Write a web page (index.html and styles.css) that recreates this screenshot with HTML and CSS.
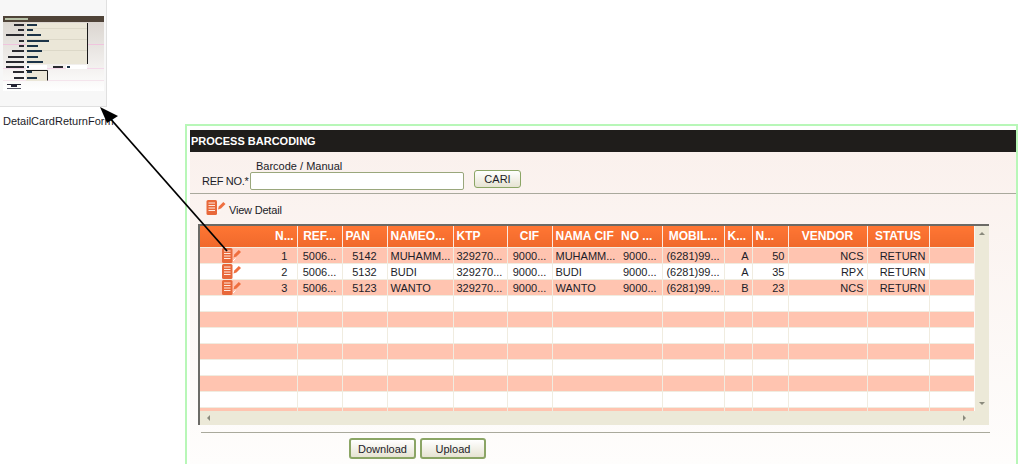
FILE: index.html
```html
<!DOCTYPE html>
<html lang="en">
  <head>
    <meta charset="UTF-8" />
    <title>Process Barcoding</title>
    <link rel="stylesheet" href="styles.css">
  </head>
  <body>
    <svg class="sprite" width="0" height="0">
      <symbol id="icon-detail" viewBox="0 0 19 15">
        <rect x="0" y="0" width="10.5" height="15" rx="1.5" fill="#e8683a"/>
        <path d="M2 3h6.5M2 5.5h6.5M2 8h6.5M2 10.5h6.5" stroke="#ffe9df" stroke-width="1"/>
        <path d="M11.5 9.5l.8-3L16.8 2l2.2 2-4.5 4.6z" fill="#ef6f3f"/>
        <path d="M11 13l2.5-2.5" stroke="#fff" stroke-width="1"/>
      </symbol>
      <linearGradient id="thumb-fade" x1="0" y1="0" x2="0" y2="1">
        <stop offset="0" stop-color="#d8d2cc"/>
        <stop offset="1" stop-color="#ffffff"/>
      </linearGradient>
    </svg>

    <div class="thumb">
      <div class="thumb-box">
        <svg class="thumb-pic" width="107" height="107" viewBox="0 0 107 107">
          <rect x="3" y="16" width="101" height="75" fill="url(#thumb-fade)"/>
          <rect x="3" y="16" width="101" height="6" fill="#4f4338"/>
          <rect x="5" y="18" width="23" height="2" fill="#b8c2a8"/>
          <rect x="3" y="44" width="101" height="1" fill="#f0c4de"/>
          <rect x="3" y="68" width="101" height="1" fill="#f4d8ea"/>
          <rect x="3" y="80" width="101" height="1" fill="#f4e4ec"/>
          <rect x="26" y="23" width="61" height="41" fill="#ebe7d8"/>
          <path d="M26 28.500h61M26 39.500h61M26 50.500h61" stroke="#dcd8c8" fill="none"/>
          <path d="M87.500 23v41" stroke="#1a1a1a" fill="none"/>
          <rect x="26" y="65" width="21" height="4" fill="#fff"/>
          <rect x="66" y="65" width="21" height="4" fill="#fff"/>
          <rect x="26" y="70" width="21" height="11" fill="#ebe7d8"/>
          <path d="M26 70.500h21.500v10" stroke="#1a1a1a" fill="none"/>
          <g fill="#2a2a30">
            <rect x="14" y="24" width="10" height="2"/><rect x="18" y="29" width="6" height="2"/>
            <rect x="6" y="34" width="18" height="2"/><rect x="19" y="40" width="5" height="2"/>
            <rect x="19" y="45" width="5" height="2"/><rect x="12" y="50" width="12" height="2"/>
            <rect x="8" y="56" width="16" height="2"/><rect x="6" y="61" width="18" height="2"/>
            <rect x="6" y="66" width="18" height="2"/><rect x="13" y="71" width="11" height="2"/>
            <rect x="14" y="77" width="10" height="2"/><rect x="53" y="66" width="10" height="2"/>
          </g>
          <g fill="#1c3448">
            <rect x="27" y="24" width="10" height="2"/><rect x="27" y="29" width="6" height="2"/>
            <rect x="27" y="34" width="14" height="2"/><rect x="27" y="40" width="22" height="2"/>
            <rect x="27" y="45" width="11" height="2"/><rect x="27" y="50" width="15" height="2"/>
            <rect x="27" y="56" width="11" height="2"/><rect x="27" y="61" width="16" height="2"/>
            <rect x="27" y="66" width="2" height="2"/><rect x="67" y="66" width="3" height="2"/>
            <rect x="27" y="71" width="5" height="2"/><rect x="27" y="77" width="10" height="2"/>
          </g>
          <rect x="7" y="84" width="14" height="1" fill="#223"/>
          <rect x="11" y="85" width="6" height="2" fill="#223"/>
          <rect x="7" y="88" width="14" height="1" fill="#556"/>
        </svg>
      </div>
      <p class="thumb-name">DetailCardReturnForm</p>
    </div>

    <div class="frame">
      <div class="panel">
        <header class="title">PROCESS BARCODING</header>

        <div class="search">
          <label class="ref-label" for="ref">REF NO.*</label>
          <div class="ref-field">
            <span class="caption">Barcode / Manual</span>
            <input id="ref" type="text" />
          </div>
          <button class="btn btn-cari">CARI</button>
        </div>

        <div class="toolbar">
          <svg class="icon" width="20" height="15"><use href="#icon-detail"/></svg>
          <span>View Detail</span>
        </div>

        <div class="grid">
          <div class="grid-main">
            <div class="grid-view">
              <table>
                <colgroup>
                  <col class="c-icon"><col class="c-no"><col class="c-ref"><col class="c-pan"><col class="c-name">
                  <col class="c-ktp"><col class="c-cif"><col class="c-nama"><col class="c-nomor"><col class="c-mobile">
                  <col class="c-k"><col class="c-n"><col class="c-vendor"><col class="c-status"><col class="c-end">
                </colgroup>
                <thead>
                  <tr>
                    <th class="noline"></th><th class="center">N...</th><th class="center">REF...</th><th>PAN</th><th>NAMEO...</th>
                    <th>KTP</th><th class="center">CIF</th><th class="noline">NAMA CIF</th><th>NO ...</th><th class="center">MOBIL...</th>
                    <th>K...</th><th>N...</th><th class="center">VENDOR</th><th class="center">STATUS</th><th></th>
                  </tr>
                </thead>
                <tbody>
                  <tr>
                    <td class="noline icon-cell"><svg class="icon" width="19" height="15"><use href="#icon-detail"/></svg></td>
                    <td class="center">1</td><td class="center">5006...</td><td class="center">5142</td><td>MUHAMM...</td>
                    <td>329270...</td><td class="center">9000...</td><td class="noline">MUHAMM...</td><td class="center">9000...</td><td class="center">(6281)99...</td>
                    <td class="right">A</td><td class="right">50</td><td class="right">NCS</td><td class="right">RETURN</td><td></td>
                  </tr>
                  <tr>
                    <td class="noline icon-cell"><svg class="icon" width="19" height="15"><use href="#icon-detail"/></svg></td>
                    <td class="center">2</td><td class="center">5006...</td><td class="center">5132</td><td>BUDI</td>
                    <td>329270...</td><td class="center">9000...</td><td class="noline">BUDI</td><td class="center">9000...</td><td class="center">(6281)99...</td>
                    <td class="right">A</td><td class="right">35</td><td class="right">RPX</td><td class="right">RETURN</td><td></td>
                  </tr>
                  <tr>
                    <td class="noline icon-cell"><svg class="icon" width="19" height="15"><use href="#icon-detail"/></svg></td>
                    <td class="center">3</td><td class="center">5006...</td><td class="center">5123</td><td>WANTO</td>
                    <td>329270...</td><td class="center">9000...</td><td class="noline">WANTO</td><td class="center">9000...</td><td class="center">(6281)99...</td>
                    <td class="right">B</td><td class="right">23</td><td class="right">NCS</td><td class="right">RETURN</td><td></td>
                  </tr>
                  <tr><td class="noline"></td><td></td><td></td><td></td><td></td><td></td><td></td><td class="noline"></td><td></td><td></td><td></td><td></td><td></td><td></td><td></td></tr>
                  <tr><td class="noline"></td><td></td><td></td><td></td><td></td><td></td><td></td><td class="noline"></td><td></td><td></td><td></td><td></td><td></td><td></td><td></td></tr>
                  <tr><td class="noline"></td><td></td><td></td><td></td><td></td><td></td><td></td><td class="noline"></td><td></td><td></td><td></td><td></td><td></td><td></td><td></td></tr>
                  <tr><td class="noline"></td><td></td><td></td><td></td><td></td><td></td><td></td><td class="noline"></td><td></td><td></td><td></td><td></td><td></td><td></td><td></td></tr>
                  <tr><td class="noline"></td><td></td><td></td><td></td><td></td><td></td><td></td><td class="noline"></td><td></td><td></td><td></td><td></td><td></td><td></td><td></td></tr>
                  <tr><td class="noline"></td><td></td><td></td><td></td><td></td><td></td><td></td><td class="noline"></td><td></td><td></td><td></td><td></td><td></td><td></td><td></td></tr>
                  <tr><td class="noline"></td><td></td><td></td><td></td><td></td><td></td><td></td><td class="noline"></td><td></td><td></td><td></td><td></td><td></td><td></td><td></td></tr>
                  <tr><td class="noline"></td><td></td><td></td><td></td><td></td><td></td><td></td><td class="noline"></td><td></td><td></td><td></td><td></td><td></td><td></td><td></td></tr>
                </tbody>
              </table>
            </div>
            <div class="vscroll"><i class="arrow-up"></i><i class="arrow-down"></i></div>
          </div>
          <div class="hscroll"><i class="arrow-left"></i><i class="arrow-right"></i></div>
        </div>

        <div class="actions">
          <button class="btn btn-download">Download</button>
          <button class="btn btn-upload">Upload</button>
        </div>
      </div>
    </div>

    <svg class="connector" width="1018" height="464">
      <line x1="108" y1="116" x2="227" y2="251" stroke="#000" stroke-width="1.8"/>
      <polygon points="100,107 118,116 107,123" fill="#000"/>
    </svg>
  </body>
</html>
```

FILE: styles.css
```css
* {
  box-sizing: border-box;
  margin: 0;
  padding: 0;
}
html, body {
  height: 464px;
  overflow: hidden;
}
body {
  position: relative;
  background-color: #fff;
  font-family: "Liberation Sans", Arial, sans-serif;
  font-size: 11px;
  color: #1c1c28;
}
.sprite {
  display: block;
  height: 0;
}
.connector {
  position: absolute;
  top: 0;
  left: 0;
  pointer-events: none;
}

/* thumbnail */
.thumb {
  width: 112px;
  height: 124px;
}
.thumb-box {
  width: 107px;
  height: 107px;
  background-color: #f7f7f7;
  border-right: 1px solid #e0e0e0;
  border-bottom: 1px solid #e0e0e0;
}
.thumb-pic {
  display: block;
}
.thumb-name {
  margin: 7px 0 0 3px;
  line-height: 14px;
  white-space: nowrap;
}

/* main frame */
.frame {
  height: 340px;
  margin-left: 185px;
  padding: 4px 0 0 3px;
  background-color: #fff;
  border: solid #b8f7b8;
  border-width: 2px 2px 0 2px;
}
.panel {
  height: 334px;
  background: linear-gradient(#faf0ec, #fefdfc);
}
.title {
  height: 22px;
  padding-left: 1px;
  line-height: 22px;
  font-size: 11px;
  font-weight: bold;
  color: #fff;
  background-color: #1f1d1b;
}
.search {
  display: flex;
  align-items: flex-end;
  height: 42px;
  padding: 9px 0 3px 12px;
  border-bottom: 1px solid #a9a99c;
}
.ref-label {
  width: 48px;
  height: 18px;
  line-height: 18px;
  letter-spacing: -0.3px;
  white-space: nowrap;
}
.ref-field {
  display: flex;
  flex-direction: column;
}
.caption {
  height: 12px;
  margin-left: 6px;
  line-height: 12px;
}
#ref {
  width: 214px;
  height: 18px;
  background-color: #fff;
  border: 1px solid #9aa77c;
  border-radius: 2px;
}
.btn {
  font-family: "Liberation Sans", Arial, sans-serif;
  font-size: 11px;
  color: #1c1c28;
  background: linear-gradient(#fff, #e6e3d2);
  border: 2px solid #8ba565;
  border-radius: 3px;
}
.btn-cari {
  width: 47px;
  height: 18px;
  margin: 0 0 2px 10px;
  border-width: 1px;
}
.toolbar {
  display: flex;
  align-items: flex-start;
  gap: 3px;
  height: 30px;
  padding: 6px 0 0 16px;
}
.toolbar span {
  margin-top: 3px;
  line-height: 14px;
  letter-spacing: -0.2px;
}
.icon {
  display: block;
}

/* grid */
.grid {
  width: 791px;
  margin-left: 8px;
  border-top: 2px solid #6b6a66;
  border-left: 2px solid #6b6a66;
}
.grid-main {
  display: flex;
  height: 185px;
}
.grid-view {
  width: 774px;
  overflow: hidden;
  background-color: #fff;
}
table {
  width: 774px;
  table-layout: fixed;
  border-collapse: collapse;
}
.c-icon { width: 72px; }
.c-no { width: 25px; }
.c-ref { width: 45px; }
.c-pan { width: 45px; }
.c-name { width: 66px; }
.c-ktp { width: 54px; }
.c-cif { width: 45px; }
.c-nama { width: 66px; }
.c-nomor { width: 44px; }
.c-mobile { width: 62px; }
.c-k { width: 28px; }
.c-n { width: 36px; }
.c-vendor { width: 79px; }
.c-status { width: 62px; }
.c-end { width: 45px; }
th {
  height: 21px;
  padding: 0 3px;
  text-align: left;
  font-size: 12px;
  color: #fff;
  white-space: nowrap;
  overflow: hidden;
  background: linear-gradient(#ff7633, #f0692c);
  border-right: 1px solid #fbe9df;
  border-bottom: 1px solid #f5eee2;
}
td {
  height: 16px;
  padding: 1px 3px 0;
  line-height: 14px;
  white-space: nowrap;
  overflow: hidden;
  border-right: 1px solid #f0ece0;
  border-bottom: 1px solid #f0ece0;
}
tbody tr:nth-child(odd) td {
  background-color: #ffc4b0;
}
th:last-child, td:last-child {
  border-right: none;
}
th.noline, td.noline {
  border-right: none;
}
td.icon-cell {
  padding: 0 0 0 22px;
}
.center {
  text-align: center;
}
.right {
  text-align: right;
}
.vscroll {
  display: flex;
  flex-direction: column;
  justify-content: space-between;
  align-items: center;
  width: 14px;
  margin-left: 1px;
  padding: 6px 0;
  background-color: #ece9d8;
}
.hscroll {
  display: flex;
  justify-content: space-between;
  align-items: center;
  width: 789px;
  height: 14px;
  padding: 0 23px 0 7px;
  background-color: #ece9d8;
}
.arrow-up, .arrow-down, .arrow-left, .arrow-right {
  display: block;
  width: 0;
  height: 0;
  border: 3px solid transparent;
}
.arrow-up {
  border-top: none;
  border-bottom-color: #8a8a7c;
}
.arrow-down {
  border-bottom: none;
  border-top-color: #8a8a7c;
}
.arrow-left {
  border-left: none;
  border-right-color: #8a8a7c;
}
.arrow-right {
  border-right: none;
  border-left-color: #8a8a7c;
}
.actions {
  display: flex;
  gap: 4px;
  width: 789px;
  height: 34px;
  margin: 7px 0 0 11px;
  padding: 5px 0 0 148px;
  border-top: 1px solid #a9a99c;
}
.btn-download {
  width: 67px;
  height: 21px;
}
.btn-upload {
  width: 66px;
  height: 21px;
}
```
